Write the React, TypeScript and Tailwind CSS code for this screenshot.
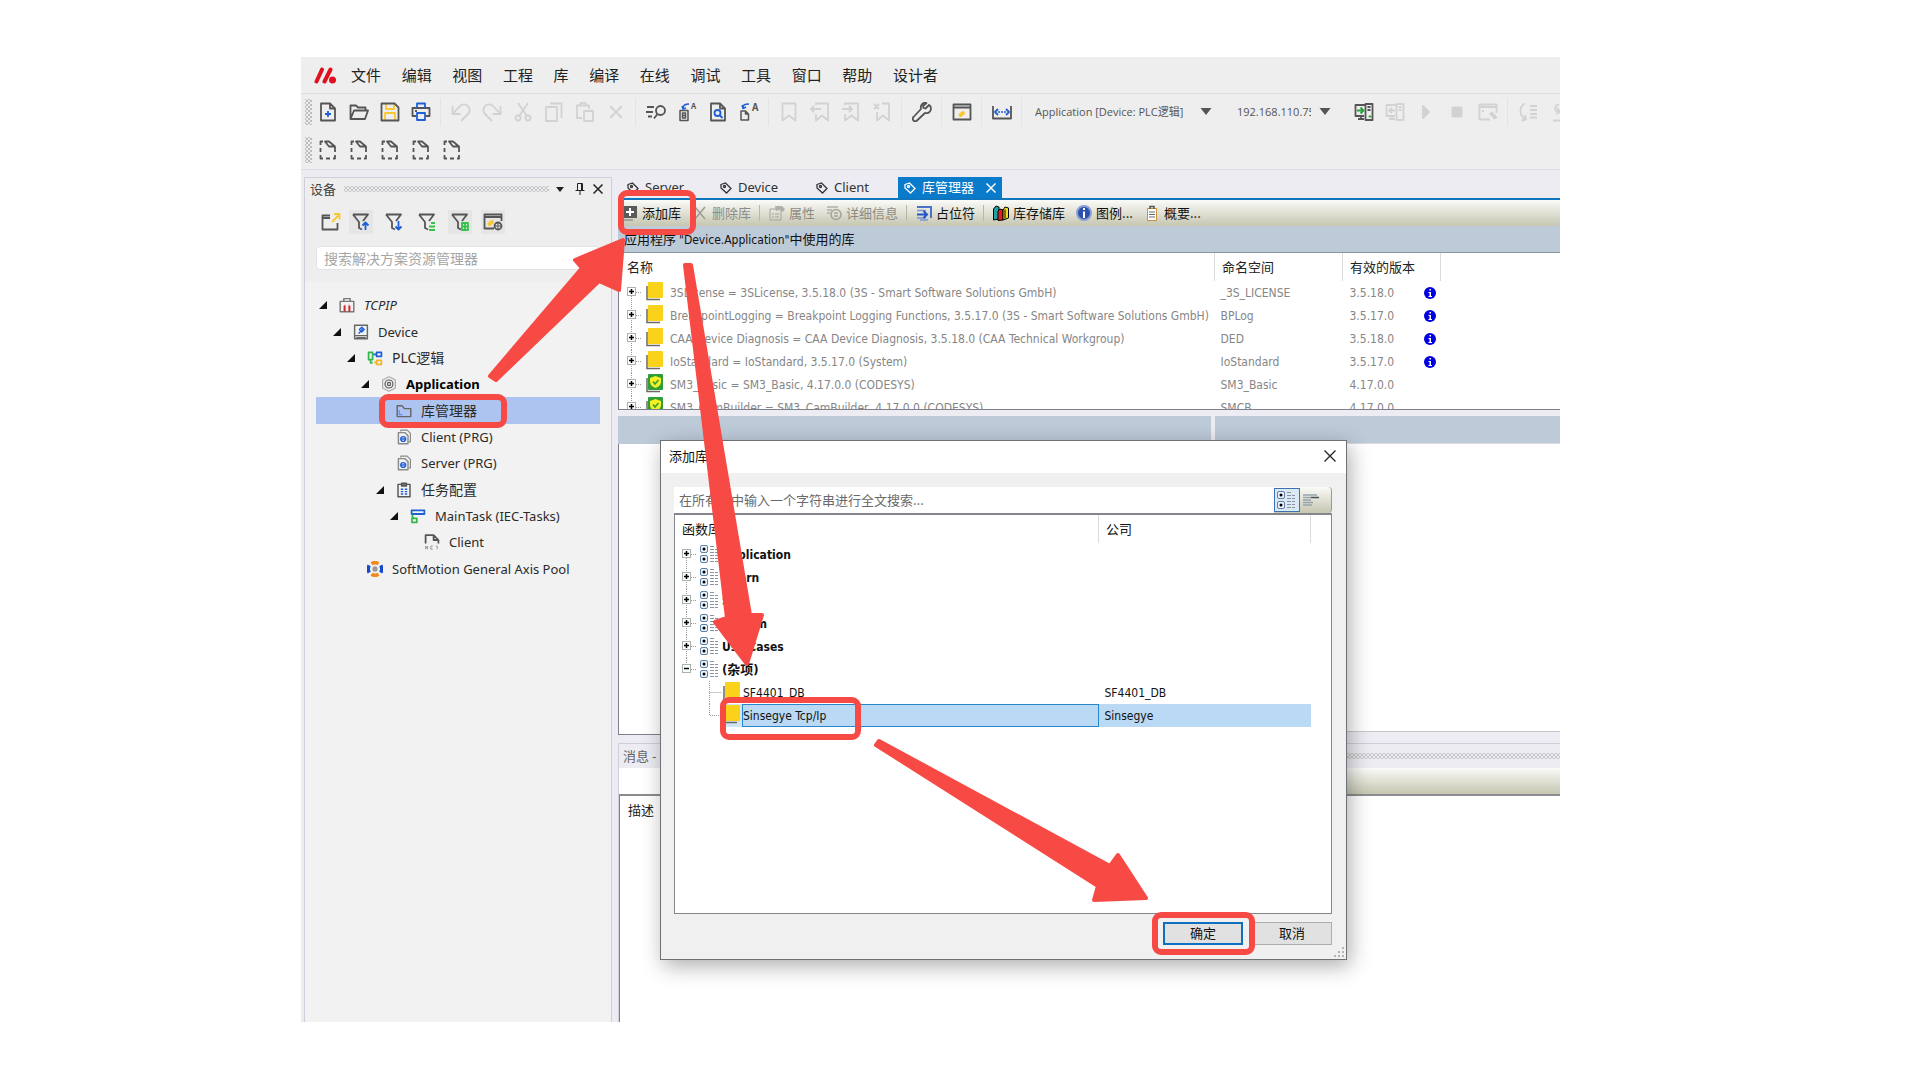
import React from 'react';
import clsx from 'clsx';

const GREY = '#555555';
const OFF = '#d2d2d2';
const BLUE = '#1f5fd6';
const YELLOW = '#fac832';

interface IconProps {
  children: React.ReactNode;
  color?: string;
  width?: number;
}

// 20x20 stroke icon shared by the toolbars
const Icon = ({ children, color = GREY, width = 1.8 }: IconProps) => (
  <svg
    viewBox="0 0 20 20"
    className="h-5 w-5 shrink-0"
    fill="none"
    stroke={color}
    strokeWidth={width}
    strokeLinejoin="round"
    aria-hidden="true"
  >
    {children}
  </svg>
);

interface Tool {
  label: string;
  icon: React.ReactNode;
  disabled?: boolean;
}

const fileTools: Tool[] = [
  {
    label: '新建',
    icon: (
      <Icon>
        <path d="M3 1.500h9l5 5v12H3z M12 1.500v5h5" />
        <path d="M10 9v6M7 12h6" stroke={BLUE} />
      </Icon>
    ),
  },
  {
    label: '打开',
    icon: (
      <Icon>
        <path d="M1.500 17V3.500h5.500l2 2h7.500v3M1.500 17L5 8.500h14L16 17z" />
      </Icon>
    ),
  },
  {
    label: '保存',
    icon: (
      <Icon>
        <path d="M6 2v5h8V2M5 18v-7h10v7" stroke={YELLOW} />
        <path d="M1.500 1.500h13l4 4v13h-17z" />
      </Icon>
    ),
  },
  {
    label: '打印',
    icon: (
      <Icon>
        <path d="M5 14H1.500V6h17v8H15M4 9h2" />
        <path d="M6 6V1.500h8V6M6 11h8v7H6z" stroke={BLUE} />
      </Icon>
    ),
  },
];

const editTools: Tool[] = [
  {
    label: '撤消',
    disabled: true,
    icon: (
      <Icon color={OFF}>
        <path d="M1.500 4v8h8M2 11.500l7-7.500a5.500 5.500 0 0 1 8 8l-7 7" />
      </Icon>
    ),
  },
  {
    label: '重做',
    disabled: true,
    icon: (
      <Icon color={OFF}>
        <path d="M18.500 4v8h-8M18 11.500L11 4a5.500 5.500 0 0 0-8 8l7 7" />
      </Icon>
    ),
  },
  {
    label: '剪切',
    disabled: true,
    icon: (
      <Icon color={OFF}>
        <path d="M5 1l8.500 12.500M15 1L6.500 13.500" />
        <circle cx="5" cy="16" r="2.500" />
        <circle cx="15" cy="16" r="2.500" />
      </Icon>
    ),
  },
  {
    label: '复制',
    disabled: true,
    icon: (
      <Icon color={OFF}>
        <path d="M2 5h11v14H2zM6 1.500h11.500V16" />
      </Icon>
    ),
  },
  {
    label: '粘贴',
    disabled: true,
    icon: (
      <Icon color={OFF}>
        <path d="M7 16H2V3.500h12V7M5 3.500a3 3 0 0 1 6 0M9 9h9v10H9z" />
      </Icon>
    ),
  },
  {
    label: '删除',
    disabled: true,
    icon: (
      <Icon color={OFF}>
        <path d="M4 4l12 12M16 4L4 16" />
      </Icon>
    ),
  },
];

const findTools: Tool[] = [
  {
    label: '查找',
    icon: (
      <Icon>
        <path d="M1 5h7M0 10h7M2 14.500h4M11.500 12L8 16.500" />
        <circle cx="14.500" cy="8.500" r="4.500" />
      </Icon>
    ),
  },
  {
    label: '替换',
    icon: (
      <Icon width={1.5}>
        <rect x="3" y="8.500" width="8" height="10" />
        <path d="M5.500 11h3v2.500h-3zM5.500 13.500h3v2.500h-3z" />
        <path d="M6 6.500c0-3 2-4.500 6-4.500M5 4l1 3 3-1" stroke={BLUE} />
        <text x="14" y="7" fontSize="8" fontWeight="700" fill={GREY} stroke="none">A</text>
      </Icon>
    ),
  },
  {
    label: '在文件中查找',
    icon: (
      <Icon>
        <path d="M3 1.500h9l5 5v12H3zM12 1.500v5h5" />
        <circle cx="9.500" cy="11" r="3" stroke={BLUE} />
        <path d="M11.500 13l3 3" stroke={BLUE} />
      </Icon>
    ),
  },
  {
    label: '在文件中替换',
    icon: (
      <Icon width={1.5}>
        <path d="M2 9h4.500l3 3v6H2zM6.500 9v3h3" />
        <path d="M4 6c0-3 1-4 6-4M3 3l1 3.500L7 5" stroke={BLUE} />
        <text x="13" y="9" fontSize="10" fontWeight="700" fill={GREY} stroke="none">A</text>
      </Icon>
    ),
  },
];

const bookmarkTools: Tool[] = [
  {
    label: '切换书签',
    disabled: true,
    icon: (
      <Icon color={OFF}>
        <path d="M3.500 1.500h13v17l-6.500-5-6.500 5z" />
      </Icon>
    ),
  },
  {
    label: '上一个书签',
    disabled: true,
    icon: (
      <Icon color={OFF}>
        <path d="M6 3V1.500h12v17l-6-5-6 5V12M11 7H1M4 4L1 7l3 3" />
      </Icon>
    ),
  },
  {
    label: '下一个书签',
    disabled: true,
    icon: (
      <Icon color={OFF}>
        <path d="M4 3V1.500h13v17l-6.500-5-6.500 5V12M1 7h10M8 4l3 3-3 3" />
      </Icon>
    ),
  },
  {
    label: '清除书签',
    disabled: true,
    icon: (
      <Icon color={OFF}>
        <path d="M10 1.500h7v17l-6-5-6 5V10M2 2l5 5M7 2L2 7" />
      </Icon>
    ),
  },
];

const Wrench = (
  <Icon>
    <path d="M17 3l-3.500 3.500-2-.5-.5-2L14.500 1C11 0 8 3 9 7L1.500 15a2 2 0 0 0 3.500 3.500l8-7.500c4 1 7-2.500 5.500-6.500z" />
  </Icon>
);

const BuildWindow = (
  <Icon>
    <path d="M1.500 2.500h17v15h-17zM1.500 5.500h17" />
    <path d="M8.500 13l2.500-2" stroke={YELLOW} strokeWidth="4" strokeLinecap="round" />
  </Icon>
);

const Range = (
  <Icon>
    <path d="M1 4v12.500h18V4" />
    <path d="M6 7l-3 3 3 3M14 7l3 3-3 3" stroke={BLUE} />
    <path d="M6 10h8" stroke={BLUE} strokeWidth="1.500" strokeDasharray="2 1" />
  </Icon>
);

const onlineTools: Tool[] = [
  {
    label: '登录',
    icon: (
      <Icon>
        <path d="M11 3H1.500v11H10M4 17h6M7 14v3M11.500 2h7v16h-7zM13.500 5h3M13.500 8h3" />
        <path d="M3 8.500h6M6.500 5.500l3 3-3 3" stroke="#24a53c" />
        <path d="M15 14h2v1h-2z" stroke="#24a53c" strokeWidth="1" />
      </Icon>
    ),
  },
  {
    label: '登出',
    disabled: true,
    icon: (
      <Icon color={OFF}>
        <path d="M11 3H1.500v11H10M4 17h6M7 14v3M11.500 2h7v16h-7zM13.500 5h3M13.500 8h3M10 8.500H4M7 6L4 8.500 7 11" />
      </Icon>
    ),
  },
  {
    label: '启动',
    disabled: true,
    icon: (
      <Icon color={OFF}>
        <path d="M7 4l6 6-6 6z" fill={OFF} />
      </Icon>
    ),
  },
  {
    label: '停止',
    disabled: true,
    icon: (
      <Icon color={OFF}>
        <rect x="5.500" y="5.500" width="9" height="9" fill={OFF} />
      </Icon>
    ),
  },
  {
    label: '组态',
    disabled: true,
    icon: (
      <Icon color={OFF}>
        <path d="M12 17.500H1.500v-15h17V11M1.500 5h17M4 9h2" />
        <path d="M12.500 10.500l5.500 6" strokeWidth="4" />
      </Icon>
    ),
  },
];

const stepTools: Tool[] = [
  {
    label: '单步跳过',
    disabled: true,
    icon: (
      <Icon color={OFF}>
        <path d="M7 1.500c-6 3-6 12 0 15.500M3.500 18.500l4.500-1-1-4.500M12 4h7M12 8h7M12 12h7M12 15.500h7" />
      </Icon>
    ),
  },
  {
    label: '单步进入',
    disabled: true,
    icon: (
      <Icon color={OFF}>
        <path d="M10 2c-5 2-5 7 0 8M7 12l4-2-3-4M4 18.500h12" />
      </Icon>
    ),
  },
];

const DashedDoc = () => (
  <Icon>
    <path d="M2.500 5V1.500H5M7 1.500h4l6 5h-6z M2.500 8v4M2.500 15v3.500H5M8 18.500h4M15 18.500h2V15M17 7v5" />
  </Icon>
);

const ToolButton = ({ label, icon, disabled }: Tool) => (
  <button
    type="button"
    aria-label={label}
    disabled={disabled}
    className="flex h-7 w-[31px] shrink-0 items-center justify-center"
  >
    {icon}
  </button>
);

const Group = ({ tools }: { tools: Tool[] }) => (
  <>
    {tools.map((tool) => (
      <ToolButton key={tool.label} {...tool} />
    ))}
  </>
);

const Divider = () => <span className="mx-1 h-7 w-px shrink-0 bg-[#e4e4e4]" />;

const Grip = () => (
  <span className="h-[26px] w-[7px] shrink-0 bg-[radial-gradient(circle,#bcbcbc_1px,transparent_1px),radial-gradient(circle,#bcbcbc_1px,transparent_1px)] bg-[length:4px_4px] bg-[position:0_0,2px_2px]" />
);

const Dots = () => (
  <span className="h-[6px] flex-1 bg-[radial-gradient(circle,#c6c6ca_1px,transparent_1px),radial-gradient(circle,#c6c6ca_1px,transparent_1px)] bg-[length:4px_4px] bg-[position:0_0,2px_2px]" />
);

const Caret = () => (
  <svg viewBox="0 0 12 8" className="h-2 w-3 shrink-0" aria-hidden="true">
    <path d="M.5 0h11L6 7z" fill={GREY} />
  </svg>
);

const menus = ['文件', '编辑', '视图', '工程', '库', '编译', '在线', '调试', '工具', '窗口', '帮助', '设计者'];

const MenuBar = () => (
  <header className="flex h-[37px] items-center border-b border-[#dfdfdf] pl-[13px]">
    <svg viewBox="0 0 22 17" className="h-[17px] w-[22px]" aria-hidden="true">
      <path d="M2.500 14.500L8 2.500M10.500 14.500L16.500 2.500" stroke="#e01020" strokeWidth="4" strokeLinecap="round" />
      <circle cx="18.500" cy="13" r="3.500" fill="#e01020" />
    </svg>
    <nav className="ml-[15px] flex w-[587px] justify-between text-[15px] text-[#222222]">
      {menus.map((name) => (
        <button key={name} type="button">
          {name}
        </button>
      ))}
    </nav>
  </header>
);

const ToolBars = () => (
  <div className="border-b border-[#dcdce2]">
    <div className="flex h-9 items-center overflow-hidden pl-1">
      <Grip />
      <Group tools={fileTools} />
      <Divider />
      <Group tools={editTools} />
      <Divider />
      <Group tools={findTools} />
      <Divider />
      <Group tools={bookmarkTools} />
      <Divider />
      <ToolButton label="选项" icon={Wrench} />
      <Divider />
      <ToolButton label="生成" icon={BuildWindow} />
      <Divider />
      <ToolButton label="范围" icon={Range} />
      <Divider />
      <label className="ml-[9px] flex shrink-0 items-center">
        <select
          aria-label="活动应用"
          className="w-[165px] appearance-none font-['Open_Sans','Noto_Sans_CJK_SC',sans-serif] text-[11px] text-[#555555]"
        >
          <option>Application [Device: PLC逻辑]</option>
        </select>
        <Caret />
      </label>
      <label className="ml-[25px] flex shrink-0 items-center">
        <select
          aria-label="设备地址"
          className="mr-2 w-[74px] appearance-none overflow-hidden font-['Open_Sans',sans-serif] text-[11px] text-[#555555]"
        >
          <option>192.168.110.75</option>
        </select>
        <Caret />
      </label>
      <span className="w-[17px] shrink-0" />
      <Group tools={onlineTools} />
      <Divider />
      <Group tools={stepTools} />
    </div>
    <div className="flex h-[39px] items-center pl-1">
      <Grip />
      {[1, 2, 3, 4, 5].map((n) => (
        <ToolButton key={n} label={`占位 ${n}`} icon={<DashedDoc />} />
      ))}
    </div>
  </div>
);

/* ---------- device tree ---------- */

const Funnel = ({ children }: { children: React.ReactNode }) => (
  <Icon>
    <path d="M2 2.500h15l-5 6.500M2 2.500l6 7.500v6l3 1.500" />
    {children}
  </Icon>
);

const filterTools: { label: string; active?: boolean; icon: React.ReactNode }[] = [
  {
    label: '上移',
    active: true,
    icon: (
      <Funnel>
        <path d="M14.500 18v-7M11.500 13.500l3-3 3 3" stroke={BLUE} />
      </Funnel>
    ),
  },
  {
    label: '下移',
    icon: (
      <Funnel>
        <path d="M14.500 9v8M11.500 14.500l3 3 3-3" stroke={BLUE} />
      </Funnel>
    ),
  },
  {
    label: '列表过滤',
    icon: (
      <Funnel>
        <path d="M14 11h4M12 14.500h6M12 18h6" stroke="#35c24b" />
      </Funnel>
    ),
  },
  {
    label: '对象过滤',
    active: true,
    icon: (
      <Funnel>
        <path d="M12 11h6v7h-6zM12 14.500h6M15 11v7" stroke="#35c24b" />
      </Funnel>
    ),
  },
  {
    label: '窗口选项',
    active: true,
    icon: (
      <Icon>
        <path d="M11 16.500H1.500v-14h17V9M1.500 5h17" />
        <path d="M6.500 12l2.500-2" stroke={YELLOW} strokeWidth="4" strokeLinecap="round" />
        <circle cx="15" cy="14" r="3.500" />
        <path d="M15 10.500v7M11.500 14h7" strokeWidth="1" />
      </Icon>
    ),
  },
];

const PrgIcon = (
  <Icon>
    <path d="M6 3V1.500h8l4 4V16h-2" strokeWidth="1.500" stroke="#8a8a8a" />
    <path d="M3 4.500h8l4 4v10H3z" stroke="#8a8a8a" />
    <circle cx="9" cy="12.500" r="3" stroke={BLUE} />
    <path d="M6 12.500h6" stroke={BLUE} />
  </Icon>
);

interface TreeNode {
  name: string;
  level: number;
  icon: React.ReactNode;
  open?: boolean;
  style?: string;
  selected?: boolean;
}

const nodes: TreeNode[] = [
  {
    name: 'TCPIP',
    level: 0,
    open: true,
    style: 'text-[13px] italic',
    icon: (
      <Icon>
        <path d="M1.500 5.500h17v13h-17zM6 5V2h8v3" stroke="#777777" />
        <path d="M7 18v-7M13 18v-7M7 11h1M12 11h1" stroke="#d02828" strokeWidth="2.500" />
      </Icon>
    ),
  },
  {
    name: 'Device',
    level: 1,
    open: true,
    style: 'text-[13px]',
    icon: (
      <Icon>
        <path d="M2 1.500h16v17H2zM2 14.500h16M4 17h12" stroke="#666666" />
        <path d="M7 12l5-6M11 4l3 3-3 3-3-3z" stroke={BLUE} />
      </Icon>
    ),
  },
  {
    name: 'PLC逻辑',
    level: 2,
    open: true,
    style: 'text-sm',
    icon: (
      <Icon width={2.2}>
        <path d="M2 3h5v9H2zM4.500 12v4H7" stroke="#35b84b" />
        <path d="M12 3h6v5h-6zM8 5.500h3" stroke={BLUE} />
        <path d="M12 13h6v5h-6zM9 15.500h2" stroke="#f0b428" />
      </Icon>
    ),
  },
  {
    name: 'Application',
    level: 3,
    open: true,
    style: 'text-[13px] font-bold text-black',
    icon: (
      <Icon width={1.5}>
        <path d="M10 1l8 4v10l-8 4-8-4V5z" stroke="#aaaaaa" />
        <circle cx="10" cy="10" r="5" />
        <circle cx="10" cy="10" r="2" />
      </Icon>
    ),
  },
  {
    name: '库管理器',
    level: 4,
    selected: true,
    style: 'text-sm',
    icon: (
      <Icon>
        <path d="M1.500 17V3.500h6l3 3.500h8v10z" stroke="#666666" />
        <path d="M4 9v5.500h4" stroke="#5b8def" strokeWidth="1.500" />
      </Icon>
    ),
  },
  { name: 'Client (PRG)', level: 4, style: 'text-[13px]', icon: PrgIcon },
  { name: 'Server (PRG)', level: 4, style: 'text-[13px]', icon: PrgIcon },
  {
    name: '任务配置',
    level: 4,
    open: true,
    style: 'text-sm',
    icon: (
      <Icon>
        <path d="M2.500 3h15v15.500h-15z" />
        <path d="M7 1.500h6V5H7z" fill="#777777" />
        <path d="M6 9h3M11 9h3M6 12h3M11 12h3M6 15h3M11 15h3" stroke={BLUE} />
      </Icon>
    ),
  },
  {
    name: 'MainTask (IEC-Tasks)',
    level: 5,
    open: true,
    style: 'text-[13px]',
    icon: (
      <Icon width={2.2}>
        <path d="M2 3h16v4.500H2z" stroke={BLUE} />
        <path d="M3 8v4h2M2.500 13h6v5h-6z" stroke="#35b84b" />
      </Icon>
    ),
  },
  {
    name: 'Client',
    level: 6,
    style: 'text-[13px]',
    icon: (
      <Icon width={2.2}>
        <path d="M2 12V1.500h10l6 6V12M12 1.500v6h6" />
        <path d="M2 19v-4l2.500 4v-4M11 15H8.500v4H11M15 15.500l1.500-.5v4" stroke="#999999" strokeWidth="1.200" />
      </Icon>
    ),
  },
  {
    name: 'SoftMotion General Axis Pool',
    level: 2,
    style: 'text-[13px]',
    icon: (
      <svg viewBox="1 1 18 18" fill="none" strokeWidth="4" aria-hidden="true">
        <path d="M6 4a8 8 0 0 1 8 0M6 16a8 8 0 0 0 8 0" stroke="#f08a1e" />
        <path d="M3.500 6a8 8 0 0 0 0 8M16.500 6a8 8 0 0 1 0 8" stroke="#1648c8" />
        <circle cx="10" cy="10" r="3" fill="#999999" />
      </svg>
    ),
  },
];

const indents = ['pl-0', 'pl-[14px]', 'pl-[28px]', 'pl-[42px]', 'pl-[57px]', 'pl-[71px]', 'pl-[85px]'];

const DevicePanel = () => (
  <aside className="ml-[3px] mt-[7px] flex w-[308px] shrink-0 flex-col border border-b-0 border-[#cfcfdc] bg-[#eeeeee]">
    <div className="flex h-[22px] items-center pl-[5px] pr-[8px] text-[13px] text-[#444444]">
      <h2 className="mr-[8px]">设备</h2>
      <Dots />
      <button type="button" aria-label="窗口位置" className="ml-[7px]">
        <svg viewBox="0 0 8 5" className="h-[5px] w-[8px]"><path d="M0 0h8L4 5z" fill="#222222" /></svg>
      </button>
      <button type="button" aria-label="固定" className="ml-[11px]">
        <svg viewBox="0 0 10 12" className="h-3 w-[10px]" fill="none" stroke="#222222">
          <path d="M2.500 7.500V.5h5v7M6.500 .5v7M.5 7.500h9M5 8v4" />
        </svg>
      </button>
      <button type="button" aria-label="关闭" className="ml-[8px]">
        <svg viewBox="0 0 10 10" className="h-[10px] w-[10px]" stroke="#222222" strokeWidth="1.500"><path d="M.5.5l9 9M9.500.5l-9 9" /></svg>
      </button>
    </div>
    <div className="flex h-11 items-center gap-[9px] pl-4">
      <button type="button" aria-label="弹出窗口" className="w-[19px]">
        <Icon>
          <path d="M9 3.500H1.500v14h15V11M1.500 6H9" />
          <path d="M11 10l7-7M13 2h5.500v5.500" stroke={YELLOW} />
        </Icon>
      </button>
      {filterTools.map(({ label, active, icon }) => (
        <button
          key={label}
          type="button"
          aria-label={label}
          className={clsx('flex h-6 w-6 items-center justify-center', active && 'bg-[#e5e5e5]')}
        >
          {icon}
        </button>
      ))}
    </div>
    <input
      type="search"
      aria-label="搜索解决方案资源管理器"
      placeholder="搜索解决方案资源管理器"
      className="mx-[11px] mb-3 mt-0.5 h-6 rounded border border-[#e2e2e8] bg-white px-[7px] text-sm placeholder:text-[#a6a6a6]"
    />
    <div className="flex-1 bg-[#f2f2f2] px-[11px] pt-[10px] font-['Noto_Sans','Noto_Sans_CJK_SC',sans-serif] text-[#2b2b2b]">
      <ul className="grid h-[290px] auto-rows-fr">
        {nodes.map(({ name, level, icon, open, style, selected }) => (
          <li
            key={name}
            className={clsx('flex items-center whitespace-nowrap', indents[level], selected && 'bg-[#adc3f0]')}
          >
            <span className="w-[23px] shrink-0 pl-[3px]">
              {open && (
                <svg viewBox="0 0 8 8" className="h-2 w-2" aria-hidden="true"><path d="M8 0v8H0z" fill="#111111" /></svg>
              )}
            </span>
            <span className="flex w-4 shrink-0 justify-center [&>svg]:h-4 [&>svg]:w-4">{icon}</span>
            <span className={clsx('ml-[9px] leading-5', style)}>{name}</span>
          </li>
        ))}
      </ul>
    </div>
  </aside>
);

/* ---------- library manager ---------- */

const TagIcon = () => (
  <svg viewBox="0 0 12 12" className="h-3 w-3 shrink-0" fill="none" stroke="currentColor" strokeWidth="1.300" aria-hidden="true">
    <path d="M1 2.500L5.500 1 11 6.500 6.500 11 1 6z" />
    <circle cx="4.500" cy="4.500" r="1" />
  </svg>
);

const tabs = [
  { name: 'Server', width: 'w-[93px]' },
  { name: 'Device', width: 'w-[96px]' },
  { name: 'Client', width: 'w-[82px]' },
];

const Separator = () => <span className="-ml-[3px] -mr-[2px] h-4 w-px bg-[#b8b8a8]" />;

const StripButton = ({ icon, text, disabled }: { icon: React.ReactNode; text: string; disabled?: boolean }) => (
  <button
    type="button"
    disabled={disabled}
    className={clsx('flex items-center gap-1', disabled ? 'text-[#8c8c84]' : 'text-[#111111]')}
  >
    <svg viewBox="0 0 16 16" className="h-4 w-4 shrink-0" fill="none" aria-hidden="true">
      {icon}
    </svg>
    {text}
  </button>
);

const LibraryStrip = () => (
  <div className="flex h-[26px] items-center gap-[11px] bg-gradient-to-b from-[#fbfbf8] to-[#c6c6b2] pb-px pl-1 text-[13px]">
    <StripButton
      text="添加库"
      icon={
        <>
          <path d="M1 1h14v12H1z" fill="#5a5a5a" />
          <path d="M8 3v8M4 7h8" stroke="white" strokeWidth="2" />
          <path d="M1 15h10" stroke="#777777" />
        </>
      }
    />
    <StripButton disabled text="删除库" icon={<path d="M3 2l10 12M13 2L3 14" stroke="#9c9c94" strokeWidth="1.500" />} />
    <Separator />
    <StripButton
      disabled
      text="属性"
      icon={
        <>
          <path d="M1 4h11v11H1z" stroke="#a4a49c" />
          <path d="M6 1h7l3 3-2 3-3-2-4 1z" fill="#b0b0a8" />
          <path d="M3 9h2M6 9h4M3 12h2M6 12h4" stroke="#a4a49c" />
        </>
      }
    />
    <StripButton
      disabled
      text="详细信息"
      icon={
        <>
          <path d="M1 2h11M1 5h5M1 8h3" stroke="#b0b0a8" strokeWidth="1.500" />
          <circle cx="10" cy="9.500" r="5" stroke="#a4a49c" strokeWidth="1.500" />
          <path d="M8 8h4M8 11h4" stroke="#a4a49c" strokeWidth="1.500" />
        </>
      }
    />
    <Separator />
    <StripButton
      text="占位符"
      icon={
        <>
          <path d="M1 2h14v11" stroke="#4a74c8" strokeWidth="2" />
          <path d="M1 5.500h9M1 13h9M4 15h8" stroke="#7a98d4" strokeWidth="1.500" />
          <path d="M1 9.500h9M7.500 6l3.500 3.500L7.500 13" stroke="#2456c8" strokeWidth="2" />
        </>
      }
    />
    <Separator />
    <StripButton
      text="库存储库"
      icon={
        <>
          <path d="M.5 4L3 1l3 1v12l-5.500 1z" fill="#20a0a0" stroke="black" />
          <path d="M5 6l2-2 3 1v10l-5 .5z" fill="#e02020" stroke="black" />
          <path d="M10 5l2-3 3.500 1v10L10 15z" fill="#f0e020" stroke="black" />
          <path d="M12 4.500v9" stroke="black" />
        </>
      }
    />
    <StripButton
      text="图例..."
      icon={
        <>
          <circle cx="8" cy="8" r="7" fill="#2a50b0" stroke="#8aa0d0" strokeWidth="2" />
          <path d="M8 3v2M8 6.500V13" stroke="white" strokeWidth="2" />
        </>
      }
    />
    <StripButton
      text="概要..."
      icon={
        <>
          <path d="M3.500 3.500h9v12h-9z" fill="white" stroke="#c89038" />
          <path d="M6 4V1.500h4V4" stroke="#555555" strokeWidth="1.500" />
          <path d="M5 7h6M5 9.500h6M5 12h6" stroke="#666666" />
        </>
      }
    />
  </div>
);

const libraries = [
  ['3SLicense = 3SLicense, 3.5.18.0 (3S - Smart Software Solutions GmbH)', '_3S_LICENSE', '3.5.18.0', 'info'],
  ['BreakpointLogging = Breakpoint Logging Functions, 3.5.17.0 (3S - Smart Software Solutions GmbH)', 'BPLog', '3.5.17.0', 'info'],
  ['CAA Device Diagnosis = CAA Device Diagnosis, 3.5.18.0 (CAA Technical Workgroup)', 'DED', '3.5.18.0', 'info'],
  ['IoStandard = IoStandard, 3.5.17.0 (System)', 'IoStandard', '3.5.17.0', 'info'],
  ['SM3_Basic = SM3_Basic, 4.17.0.0 (CODESYS)', 'SM3_Basic', '4.17.0.0', 'signed'],
  ['SM3_CamBuilder = SM3_CamBuilder, 4.17.0.0 (CODESYS)', 'SMCB', '4.17.0.0', 'signed'],
];

const Expander = ({ open, first, last }: { open?: boolean; first?: boolean; last?: boolean }) => (
  <g fill="none" stroke="#9a9a9a">
    <path d={first ? 'M11.500 15v8' : last ? 'M11.500 0v6' : 'M11.500 0v23'} strokeDasharray="1 1" />
    <path d="M16 11.500h6" strokeDasharray="1 1" />
    <rect x="7.500" y="6.500" width="8" height="8" fill="white" stroke="#a8b4b0" />
    <path d={open ? 'M9 10.500h5' : 'M9 10.500h5M11.500 8v5'} stroke="black" strokeWidth="1.500" />
  </g>
);

const LibGlyph = ({ x, signed }: { x: number; signed?: boolean }) => (
  <g transform={`translate(${x} 1)`}>
    <path d="M1 4v13.500h13" fill="none" stroke="#6a6a6a" strokeWidth="1.500" />
    <rect x="2" y="0" width="15" height="16" rx="1" fill={signed ? '#2f9e34' : '#fbd21a'} />
    {signed && (
      <>
        <path d="M9.500 2L15 4v4c0 3-2.500 5-5.500 6C6.500 13 4 11 4 8V4z" fill="#f4f024" />
        <path d="M7 7.500l2 2.500 3.500-4" fill="none" stroke="#2f9e34" strokeWidth="1.500" />
      </>
    )}
  </g>
);

const InfoDot = () => (
  <svg viewBox="0 0 12 12" className="h-3 w-3" role="img" aria-label="信息">
    <circle cx="6" cy="6" r="6" fill="#0000e0" />
    <path d="M5.500 2h1.500v1.500H5.500zM4.500 5H7v4h1v1H4.500V9h1V6h-1z" fill="white" />
  </svg>
);

const LibraryList = () => (
  <div className="h-[157px] overflow-hidden border-b border-l border-[#80808c] bg-white">
    <table className="w-[822px] table-fixed text-left">
      <colgroup>
        <col />
        <col className="w-[128px]" />
        <col className="w-[98px]" />
      </colgroup>
      <thead>
        <tr className="h-7 text-[13px] text-[#222222] [&>th]:border-r [&>th]:border-[#dcdcdc] [&>th]:font-normal">
          <th className="pl-2">名称</th>
          <th className="pl-[7px]">命名空间</th>
          <th className="pl-[7px]">有效的版本</th>
        </tr>
      </thead>
      <tbody className="font-['DejaVu_Sans_Condensed',sans-serif] text-xs text-[#868686]">
        {libraries.map(([name, space, version, kind], i) => (
          <tr key={name} className="h-[23px]">
            <td>
              <div className="flex h-[23px] items-center gap-1 whitespace-nowrap pl-px">
                <svg viewBox="0 0 46 23" className="h-[23px] w-[46px] shrink-0" aria-hidden="true">
                  <Expander first={i === 0} />
                  <LibGlyph x={26} signed={kind === 'signed'} />
                </svg>
                {name}
              </div>
            </td>
            <td className="pl-[6px]">{space}</td>
            <td className="pl-[7px]">
              <div className="flex items-center justify-between pr-[5px]">
                {version}
                {kind === 'info' && <InfoDot />}
              </div>
            </td>
          </tr>
        ))}
      </tbody>
    </table>
  </div>
);

const Editor = () => (
  <section className="flex min-w-0 flex-1 flex-col">
    <div className="mt-[7px] flex h-[23px] border-b-2 border-[#0f76bd] pl-[9px] font-['Noto_Sans','Noto_Sans_CJK_SC',sans-serif] text-[13px] text-[#333333]">
      {tabs.map(({ name, width }) => (
        <button key={name} type="button" className={clsx('flex items-center gap-[6px]', width)}>
          <TagIcon />
          {name}
        </button>
      ))}
      <div className="flex w-[104px] items-center justify-between bg-[#0a7acb] px-[6px] text-white">
        <button type="button" className="flex items-center gap-[6px]">
          <TagIcon />
          库管理器
        </button>
        <button type="button" aria-label="关闭标签">
          <svg viewBox="0 0 10 10" className="h-[10px] w-[10px]" stroke="white" strokeWidth="1.500"><path d="M.5.5l9 9M9.500.5l-9 9" /></svg>
        </button>
      </div>
    </div>
    <LibraryStrip />
    <div className="flex h-[27px] items-center border-b border-[#8c93a0] bg-[#bdcad8] pl-[6px] text-[13px] text-[#111111]">
      <p>
        应用程序 <span className="font-['DejaVu_Sans_Condensed',sans-serif] text-xs">"Device.Application"</span>中使用的库
      </p>
    </div>
    <LibraryList />
    <div className="flex flex-1 gap-1 pt-[6px]">
      <div className="flex w-[593px] flex-col">
        <div className="h-7 bg-[#bdcad8]" />
        <div className="flex-1 border-b border-l border-[#80808c] bg-white" />
      </div>
      <div className="flex flex-1 flex-col pb-[3px]">
        <div className="h-7 border-b border-[#dcdce2] bg-[#bdcad8]" />
        <div className="flex-1 border-b border-[#c8c8cc] bg-white" />
      </div>
    </div>
    <div className="mt-[8px] flex h-[279px] flex-col border-l border-t border-[#cfcfdc]">
      <div className="flex h-[24px] items-center gap-2 pl-1 text-[13px] text-[#666666]">
        <h2>消息 -</h2>
        <Dots />
      </div>
      <div className="flex h-[28px] border-b-2 border-[#8c8c90]">
        <div className="w-20 bg-white" />
        <div className="flex-1 bg-gradient-to-b from-[#fbfbf8] to-[#c6c6b2]" />
      </div>
      <div className="flex-1 border-l border-[#80808c] bg-white pl-2 pt-1 text-[13px] text-[#222222]">描述</div>
    </div>
  </section>
);

/* ---------- add library dialog ---------- */

const GroupGlyph = () => (
  <g>
    <rect x="25.500" y="2.500" width="7" height="7" rx="1.500" fill="#eaf2fa" stroke="#5d80a8" />
    <rect x="25.500" y="12.500" width="7" height="7" rx="1.500" fill="#eaf2fa" stroke="#5d80a8" />
    <circle cx="29" cy="6" r="1.500" fill="black" />
    <circle cx="29" cy="16" r="1.500" fill="black" />
    <path d="M35 3.500h4M35 6.500h4M35 9.500h4M35 12.500h4M35 15.500h4M35 18.500h4M40 6.500h3M40 9.500h3M40 12.500h3M40 15.500h3M40 18.500h3" stroke="#8a94a0" />
  </g>
);

const categories = ['Application', 'Intern', 'SM3', 'System', 'Use Cases', '(杂项)'];

const entries = [
  { name: 'SF4401_DB', company: 'SF4401_DB' },
  { name: 'Sinsegye Tcp/Ip', company: 'Sinsegye', selected: true },
];

const AddLibraryDialog = () => (
  <div
    role="dialog"
    aria-label="添加库"
    className="absolute left-[359px] top-[383px] w-[687px] border border-[#6e7276] bg-[#f0f0f0] text-[13px] text-[#111111] shadow-[3px_6px_20px_rgba(0,0,0,0.32)]"
  >
    <div className="flex h-8 items-center justify-between bg-white pb-0.5 pl-2 pr-[10px]">
      <h2>添加库</h2>
      <button type="button" aria-label="关闭">
        <svg viewBox="0 0 12 12" className="h-3 w-3" stroke="#222222" strokeWidth="1.300"><path d="M.5.5l11 11M11.500.5l-11 11" /></svg>
      </button>
    </div>
    <div className="pb-[14px] pl-[13px] pr-[14px] pt-[14px]">
      <div className="flex h-[26px]">
        <input
          type="text"
          aria-label="搜索库"
          placeholder="在所有库中输入一个字符串进行全文搜索..."
          className="min-w-0 flex-1 bg-white pl-[5px] placeholder:text-[#6a6a6a]"
        />
        <div className="flex w-[58px] items-center rounded-r border-r border-[#9a9a92] bg-gradient-to-b from-[#fbfbf8] to-[#c6c6b2]">
          <button type="button" aria-label="按类别分组" className="h-6 w-[26px] border border-[#3c72b0] bg-[#dbe8f6]">
            <svg viewBox="23 0 24 22" className="h-[22px] w-6" aria-hidden="true"><GroupGlyph /></svg>
          </button>
          <button type="button" aria-label="平铺列表" className="ml-[3px]">
            <svg viewBox="0 0 16 12" className="h-3 w-4" strokeWidth="1.500" stroke="#98a4ac" aria-hidden="true">
              <path d="M0 1h14M0 6h8M0 8.500h10M0 11h9" />
              <path d="M8 3.500h8" stroke="#44505c" />
              <path d="M0 3.500h8" />
            </svg>
          </button>
        </div>
      </div>
      <div className="h-[401px] border border-t-2 border-[#85858d] bg-white">
        <table className="w-[636px] table-fixed text-left">
          <colgroup>
            <col />
            <col className="w-[212px]" />
          </colgroup>
          <thead>
            <tr className="h-7 [&>th]:border-r [&>th]:border-[#dcdcdc] [&>th]:font-normal">
              <th className="pl-[7px]">函数库</th>
              <th className="pl-[7px]">公司</th>
            </tr>
          </thead>
          <tbody className="font-['DejaVu_Sans_Condensed','Noto_Sans_CJK_SC',sans-serif] text-xs">
            {categories.map((name, i) => (
              <tr key={name} className="h-[23px] font-bold">
                <td>
                  <div className={clsx('flex h-[23px] items-center gap-[3px]', i === 5 && 'text-[13px]')}>
                    <svg viewBox="0 0 44 23" className="h-[23px] w-[44px] shrink-0" aria-hidden="true">
                      <Expander first={i === 0} last={i === 5} open={i === 5} />
                      <GroupGlyph />
                    </svg>
                    {name}
                  </div>
                </td>
                <td />
              </tr>
            ))}
            {entries.map(({ name, company, selected }) => (
              <tr key={name} className="h-[23px]">
                <td>
                  <div className="flex h-[23px] items-center">
                    <svg viewBox="0 0 67 23" className="h-[23px] w-[67px] shrink-0" aria-hidden="true">
                      {selected && <path d="M48 0h19v23H48z" fill="#cfe4f7" />}
                      <path
                        d={selected ? 'M34.500 0v11.500H47' : 'M34.500 0v23M34.500 11.500H47'}
                        fill="none"
                        stroke="#9a9a9a"
                        strokeDasharray="1 1"
                      />
                      <LibGlyph x={48} />
                    </svg>
                    <span
                      className={clsx(
                        'flex h-full flex-1 items-center border',
                        selected ? 'border-[#2a86cc] bg-[#b9d9f5]' : 'border-transparent'
                      )}
                    >
                      {name}
                    </span>
                  </div>
                </td>
                <td className={clsx('pl-[6px]', selected && 'bg-[#b9d9f5]')}>{company}</td>
              </tr>
            ))}
          </tbody>
        </table>
      </div>
      <div className="mt-2 flex justify-end gap-[9px]">
        <button type="button" className="flex h-[23px] w-[80px] items-center justify-center border-2 border-[#0f6fc0] bg-[#e1e1e1] pb-0.5">
          确定
        </button>
        <button type="button" className="flex h-[23px] w-[80px] items-center justify-center border border-[#adadad] bg-[#e1e1e1] pb-0.5">
          取消
        </button>
      </div>
    </div>
    <svg viewBox="0 0 10 10" className="absolute bottom-[2px] right-[2px] h-[10px] w-[10px]" fill="#b4b4b4" aria-hidden="true">
      <path d="M8 0h2v2H8zM4 4h2v2H4zM8 4h2v2H8zM0 8h2v2H0zM4 8h2v2H4zM8 8h2v2H8z" />
    </svg>
  </div>
);

// Red boxes and arrows that walk through the steps
const Steps = () => (
  <svg
    viewBox="0 0 1259 965"
    className="pointer-events-none absolute left-0 top-0 h-[965px] w-[1259px]"
    aria-hidden="true"
  >
    <g fill="none" stroke="#f74a45" strokeWidth="6">
      <rect x="320" y="136" width="72" height="39" rx="6" />
      <rect x="81" y="340" width="122" height="28" rx="6" />
      <rect x="422" y="643" width="135" height="37" rx="6" />
      <rect x="854" y="858" width="97" height="37" rx="6" />
    </g>
    <g fill="#f74a45" stroke="#f74a45" strokeWidth="4" strokeLinejoin="round">
      <path d="M189 319L281 211 274 203 322 183 318 233 298 224 195 323z" />
      <path d="M384 208L390 208 449 558 461 558 446 607 414 565 426 561z" />
      <path d="M575 688L578 684 809 809 817 798 845 841 793 843 797 829z" />
    </g>
  </svg>
);

export default function App() {
  return (
    <div className="flex min-h-screen bg-white pb-[58px] pl-[301px] pr-[360px] pt-[57px] font-['Noto_Sans_CJK_SC','Noto_Sans',sans-serif]">
      <main className="relative flex min-w-0 flex-1 flex-col bg-[#eeeeee]">
        <MenuBar />
        <ToolBars />
        <div className="flex flex-1 gap-[6px] bg-[#ececf2]">
          <DevicePanel />
          <Editor />
        </div>
        <AddLibraryDialog />
        <Steps />
      </main>
    </div>
  );
}
